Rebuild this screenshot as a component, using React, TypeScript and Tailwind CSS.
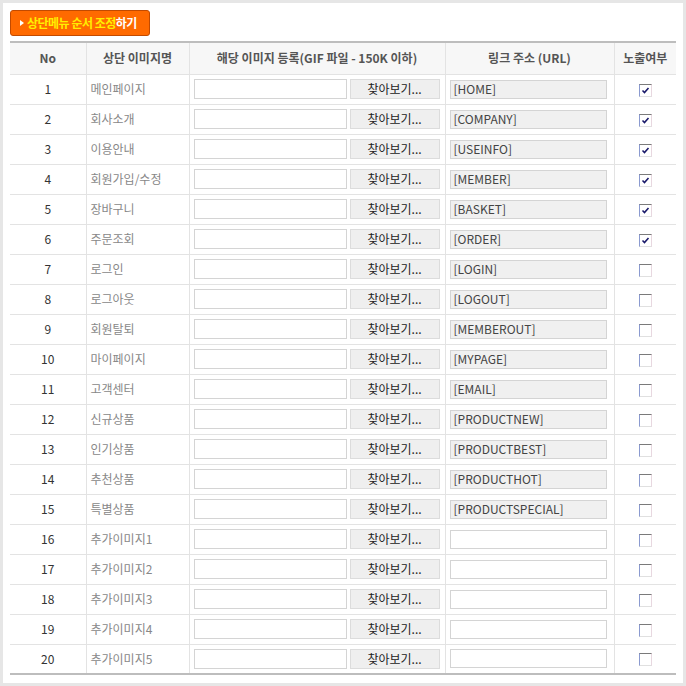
const rows = [
  { name: "메인페이지", link: "[HOME]", on: true },
  { name: "회사소개", link: "[COMPANY]", on: true },
  { name: "이용안내", link: "[USEINFO]", on: true },
  { name: "회원가입/수정", link: "[MEMBER]", on: true },
  { name: "장바구니", link: "[BASKET]", on: true },
  { name: "주문조회", link: "[ORDER]", on: true },
  { name: "로그인", link: "[LOGIN]", on: false },
  { name: "로그아웃", link: "[LOGOUT]", on: false },
  { name: "회원탈퇴", link: "[MEMBEROUT]", on: false },
  { name: "마이페이지", link: "[MYPAGE]", on: false },
  { name: "고객센터", link: "[EMAIL]", on: false },
  { name: "신규상품", link: "[PRODUCTNEW]", on: false },
  { name: "인기상품", link: "[PRODUCTBEST]", on: false },
  { name: "추천상품", link: "[PRODUCTHOT]", on: false },
  { name: "특별상품", link: "[PRODUCTSPECIAL]", on: false },
  { name: "추가이미지1", link: "", on: false },
  { name: "추가이미지2", link: "", on: false },
  { name: "추가이미지3", link: "", on: false },
  { name: "추가이미지4", link: "", on: false },
  { name: "추가이미지5", link: "", on: false },
];

function CheckBox({ on }: { on: boolean }) {
  return (
    <span className="inline-flex w-[13px] h-[13px] items-center justify-center border border-t-[#7a7a7a] border-l-[#8a9ad0] border-r-[#e8d8e0] border-b-[#e0e0e0] bg-white">
      {on && (
        <svg width="9" height="9" viewBox="0 0 9 9">
          <path d="M1.5 4.5 L3.5 6.5 L7.5 2" fill="none" stroke="#1a1a6a" strokeWidth="1.6" />
        </svg>
      )}
    </span>
  );
}

export default function App() {
  return (
    <div
      className="w-[686px] h-[686px] bg-[#e6e6e6] p-[3px]"
      style={{ fontFamily: '"Noto Sans CJK KR", "Noto Sans", sans-serif' }}
    >
      <div className="w-full h-full bg-white pt-[7px] px-[7px]">
        <button className="flex items-center w-[140px] h-[26px] rounded-[3px] border border-[#c24a00] bg-[#ff6a00] pl-[9px] text-[12px] font-bold leading-none tracking-[-0.5px]">
          <span className="mr-[3px] w-0 h-0 border-y-[3px] border-y-transparent border-l-[4px] border-l-white" />
          <span className="text-[#ffee00]">상단메뉴 순서 조정</span>
          <span className="text-white">하기</span>
        </button>
        <table className="mt-[5px] w-[666px] border-collapse table-fixed text-[12px] border-t-2 border-b-2 border-[#bdbdbd]">
          <colgroup>
            <col className="w-[76px]" />
            <col className="w-[103px]" />
            <col className="w-[256px]" />
            <col className="w-[169px]" />
            <col className="w-[62px]" />
          </colgroup>
          <thead>
            <tr className="h-[32px] bg-[#f7f7f7] text-[#555] font-bold">
              <th className="border-r border-[#e3e3e3] font-bold">No</th>
              <th className="border-r border-[#e3e3e3] font-bold">상단 이미지명</th>
              <th className="border-r border-[#e3e3e3] font-bold">해당 이미지 등록(GIF 파일 - 150K 이하)</th>
              <th className="border-r border-[#e3e3e3] font-bold">링크 주소 (URL)</th>
              <th className="font-bold">노출여부</th>
            </tr>
          </thead>
          <tbody>
            {rows.map((r, i) => (
              <tr key={i} className="h-[30px] border-t border-[#e3e3e3]">
                <td className="border-r border-[#e3e3e3] text-center text-[#333]">{i + 1}</td>
                <td className="border-r border-[#e3e3e3] pl-[4px] text-[#888] whitespace-nowrap">{r.name}</td>
                <td className="border-r border-[#e3e3e3] pl-[4px]">
                  <div className="flex items-center gap-[3px]">
                    <div className="w-[153px] h-[20px] border border-[#d4d4d4] bg-white" />
                    <div className="w-[90px] h-[20px] border border-[#dcdcdc] bg-[#efefef] flex items-center justify-center text-[#222] text-[12px]">
                      찾아보기...
                    </div>
                  </div>
                </td>
                <td className="border-r border-[#e3e3e3] pl-[4px]">
                  <div
                    className={
                      r.link
                        ? "w-[157px] h-[19px] border border-[#d4d4d4] bg-[#f0f0f0] pl-[3px] flex items-center text-[#444] text-[12px]"
                        : "w-[157px] h-[19px] border border-[#d4d4d4] bg-white"
                    }
                  >
                    {r.link}
                  </div>
                </td>
                <td className="text-center">
                  <div className="flex justify-center pt-[2px]">
                    <CheckBox on={r.on} />
                  </div>
                </td>
              </tr>
            ))}
          </tbody>
        </table>
      </div>
    </div>
  );
}
